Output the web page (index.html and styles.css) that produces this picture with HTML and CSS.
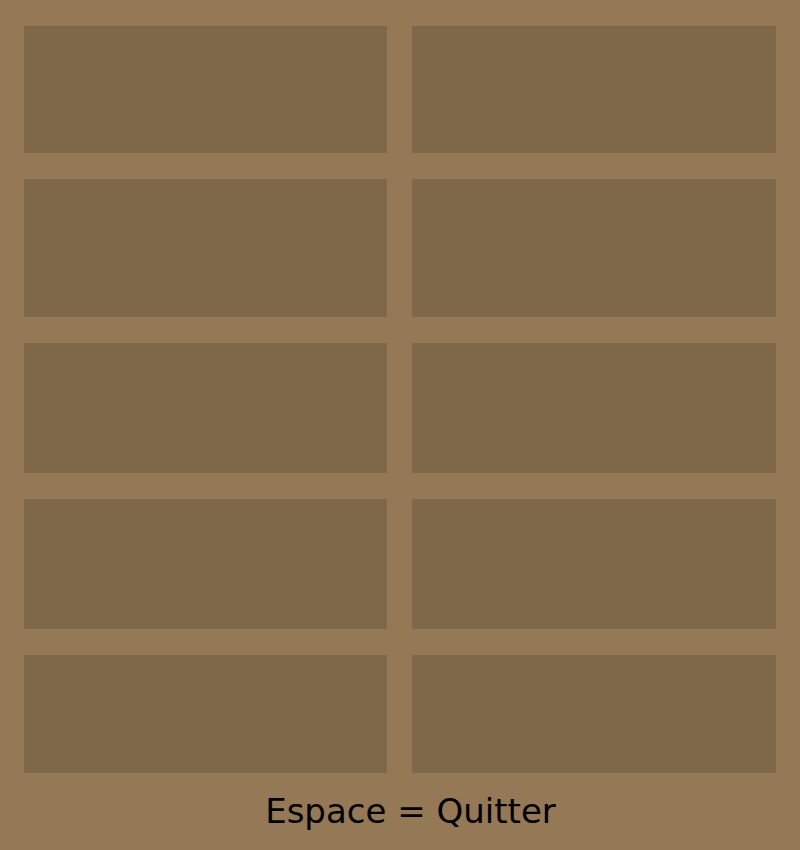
FILE: index.html
```html
<!DOCTYPE html>
<html lang="fr">
<head>
<meta charset="utf-8">
<title>Espace</title>
<link rel="stylesheet" href="styles.css">
</head>
<body>
<main class="screen">
  <section class="board">
    <div class="slot"></div><div class="slot"></div>
    <div class="slot"></div><div class="slot"></div>
    <div class="slot"></div><div class="slot"></div>
    <div class="slot"></div><div class="slot"></div>
    <div class="slot"></div><div class="slot"></div>
  </section>
  <footer class="hint">Espace = Quitter</footer>
</main>
</body>
</html>
```

FILE: styles.css
```css
html, body {
  margin: 0;
  padding: 0;
  background: #957855;
}
.screen {
  width: 800px;
  height: 850px;
  box-sizing: border-box;
  padding-top: 26px;
}
.board {
  display: grid;
  grid-template-columns: 363px 364px;
  grid-template-rows: 127px 138px 130px 130px 118px;
  column-gap: 25px;
  row-gap: 26px;
  padding: 0 24px;
}
.slot {
  background: #7f6849;
}
.hint {
  margin-top: 18px;
  padding-left: 21px;
  text-align: center;
  font-family: "DejaVu Sans", sans-serif;
  font-size: 34px;
  line-height: 40px;
  color: #000;
}
```
